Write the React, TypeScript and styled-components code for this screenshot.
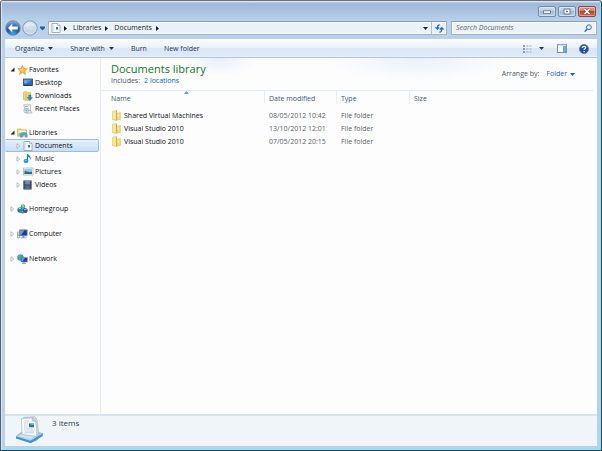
import React from "react";
import styled, { createGlobalStyle } from "styled-components";

const GlobalStyle = createGlobalStyle`
  * { box-sizing: border-box; }
  html, body { margin: 0; padding: 0; }
  body, button, input, table {
    font-family: "Open Sans", "Noto Sans", sans-serif;
    font-size: 7px;
    line-height: 12px;
  }
  button { border: 0; padding: 0; background: none; color: inherit; cursor: default; }
  svg { display: block; flex: none; }
`;

const Window = styled.div`
  min-height: 100vh;
  display: flex;
  flex-direction: column;
  padding: 0 4px 4px;
  border: 1px solid #0c4a5c;
  border-top-color: #707078;
  border-left-color: #57606c;
  border-radius: 3px 3px 0 0;
  background: linear-gradient(#d8e3f1 0, #d8e3f1 1px, #9db7d7 2px, #b9d1ea 20px, #b9d1ea 100%);
  box-shadow: inset 1px 0 #d9e8f6, inset -1px 0 #9de0f5, inset 0 -1px #9fdcf2;
`;

const TitleBar = styled.header`
  display: flex;
  justify-content: flex-end;
  gap: 2px;
  height: 20px;
  padding: 5px 1px 4px 0;
`;

const CaptionButton = styled.button<{ $danger?: boolean }>`
  width: 18px;
  height: 11px;
  display: flex;
  align-items: center;
  justify-content: center;
  border: 1px solid ${(p) => (p.$danger ? "#84494a" : "#7089a5")};
  border-radius: 2px;
  background: ${(p) =>
    p.$danger
      ? "linear-gradient(#e5a795, #d47a62 45%, #bf4327 50%, #d8694a)"
      : "linear-gradient(#cbdcef, #b9cee5 45%, #9fbad7 50%, #b9d2eb)"};
  box-shadow: inset 0 0 0 1px rgba(255, 255, 255, 0.35);
`;

const AddressRow = styled.div`
  display: flex;
  align-items: center;
  height: 14px;
`;

const HistoryButtons = styled.div`
  display: flex;
  align-items: center;
  width: 43px;
  gap: 1px;
`;

const AddressBar = styled.nav`
  flex: 1;
  display: flex;
  align-items: center;
  height: 14px;
  padding-left: 2px;
  border: 1px solid #a3b1c2;
  border-top-color: #909ca9;
  background: #ebf1f8;
  box-shadow: inset 0 0 0 1px #f8fbfe;
`;

const CrumbLead = styled.span`
  display: flex;
  margin-left: 3px;
`;

const Crumb = styled.button`
  color: #1b1f26;
  margin: 0 4px 0 6px;
`;

const RefreshButton = styled.button`
  display: flex;
  align-items: center;
  justify-content: center;
  width: 15px;
  height: 12px;
  border-left: 1px solid #b4c0ce;
`;

const DropButton = styled.button`
  display: flex;
  align-items: center;
  margin-left: auto;
  padding: 2px 3px;
`;

const SearchBox = styled.label`
  display: flex;
  align-items: center;
  width: 146px;
  height: 14px;
  margin-left: 4px;
  padding: 0 4px;
  border: 1px solid #a3b1c2;
  border-top-color: #909ca9;
  background: #edf2f9;
  box-shadow: inset 0 0 0 1px #f8fbfe;
`;

const SearchInput = styled.input`
  flex: 1;
  min-width: 0;
  height: 12px;
  padding: 0;
  border: 0;
  outline: 0;
  background: transparent;
  font-style: italic;
  color: #333;
  &::placeholder { color: #62676e; opacity: 1; }
`;

const CommandBar = styled.div`
  display: flex;
  align-items: center;
  height: 19px;
  margin-top: 4px;
  padding: 0 8px 0 10px;
  border-top: 1px solid #fff;
  border-bottom: 1px solid #b3c4d9;
  background: linear-gradient(#fafcff, #eaf1fb 48%, #dce6f4 50%, #dde8f6 90%, #eaf2fb);
`;

const Command = styled.button<{ $space?: number }>`
  display: flex;
  align-items: center;
  gap: 4px;
  margin-right: ${(p) => p.$space ?? 17}px;
  color: #1e395b;
`;

const ViewDrop = styled.span`
  display: flex;
  margin-left: 3px;
`;

const Spacer = styled.div`
  flex: 1;
`;

const Body = styled.div`
  flex: 1;
  display: flex;
  background: #fdfdfe;
`;

const Sidebar = styled.aside`
  width: 96px;
  flex: none;
  padding: 5px 1px 0 0;
  border-right: 1px solid #e3edf8;
`;

const Group = styled.section<{ $leaf?: boolean }>`
  margin-bottom: ${(p) => (p.$leaf ? 12 : 11)}px;
`;

const NavRow = styled.button<{ $child?: boolean; $selected?: boolean }>`
  display: flex;
  align-items: center;
  width: 100%;
  height: 13px;
  padding-left: ${(p) => (p.$child ? 11 : 5)}px;
  border: 1px solid ${(p) => (p.$selected ? "#9dbde0" : "transparent")};
  border-left-width: 0;
  border-radius: 2px;
  background: ${(p) => (p.$selected ? "linear-gradient(#e6f1fc, #c5def7)" : "none")};
  color: #0c0e12;
  line-height: 11px;
`;

const Twist = styled.span`
  display: flex;
  width: 7px;
`;

const NavIcon = styled.span`
  display: flex;
  width: 12px;
`;

const Main = styled.main`
  flex: 1;
  min-width: 0;
  background:
    radial-gradient(ellipse 36px 18px at 24% 0, #e8eef8, rgba(253, 253, 254, 0)),
    radial-gradient(ellipse 90px 24px at 64% 0, #eaf0f9, rgba(253, 253, 254, 0)),
    #fdfdfe;
`;

const LibraryHeader = styled.div`
  display: flex;
  justify-content: space-between;
  align-items: center;
  height: 32px;
  padding: 0 22px 0 10px;
`;

const Title = styled.h1`
  margin: 0;
  font-size: 11px;
  line-height: 14px;
  font-weight: 400;
  color: #0f7a1c;
`;

const Caption = styled.div`
  display: flex;
  align-items: center;
  line-height: 10px;
  color: #4c5560;
`;

const Link = styled.a`
  margin-left: 4px;
  color: #0a66c8;
  text-decoration: none;
`;

const ArrangeButton = styled.button`
  display: flex;
  align-items: center;
  gap: 3px;
  margin-left: 7px;
  color: #0a66c8;
`;

const FileTable = styled.table`
  width: calc(100% - 4px);
  table-layout: fixed;
  border-collapse: separate;
  border-spacing: 0;
  color: #5c5f64;
`;

const HeadCell = styled.th<{ $width?: number }>`
  position: relative;
  width: ${(p) => (p.$width ? `${p.$width}px` : "auto")};
  height: 19px;
  padding: 2px 0 4px 4px;
  border-top: 1px solid #dfebf7;
  background: ${(p) =>
    p.$width ? "linear-gradient(#dfebf7, #e6eff9) right top / 1px 13px no-repeat" : "none"};
  color: #40546e;
  font-weight: 400;
  text-align: left;
  &:first-child { padding-left: 10px; }
`;

const SortMark = styled.svg`
  position: absolute;
  top: 0;
  left: 83px;
`;

const Cell = styled.td`
  height: 13px;
  padding: 0 0 0 4px;
  white-space: nowrap;
`;

const FileName = styled.div`
  display: flex;
  align-items: center;
  gap: 3px;
  padding-left: 7px;
  color: #0c0e12;
`;

const StatusBar = styled.footer`
  display: flex;
  height: 32px;
  padding: 0 0 0 9px;
  gap: 8px;
  border-top: 2px solid #dae5f2;
  background: #f0f5fa;
  color: #2c3849;
`;

const Count = styled.span`
  padding-top: 1px;
  font-size: 8px;
`;

const Triangle = ({ color = "#1e395b" }: { color?: string }) => (
  <svg width="5" height="3" viewBox="0 0 5 3"><path d="M0 0h5L2.500 3z" fill={color} /></svg>
);
const CrumbArrow = () => (
  <svg width="3" height="5" viewBox="0 0 3 5"><path d="M0 0l3 2.500L0 5z" fill="#111820" /></svg>
);
const Opened = () => (
  <svg width="5" height="5" viewBox="0 0 5 5"><path d="M4.500 .5v4h-4z" fill="#222" /></svg>
);
const Closed = () => (
  <svg width="5" height="6" viewBox="0 0 5 6"><path d="M1 .7v4.600L3.700 3z" fill="#fff" stroke="#999da3" strokeWidth=".7" /></svg>
);

const BackIcon = () => (
  <svg width="16" height="16" viewBox="0 0 16 16">
    <defs>
      <radialGradient id="back" cx=".5" cy=".9" r=".9">
        <stop offset="0" stopColor="#3fa5ee" /><stop offset=".5" stopColor="#1b519f" /><stop offset="1" stopColor="#8eb7e2" />
      </radialGradient>
    </defs>
    <circle cx="8" cy="8" r="7.300" fill="url(#back)" stroke="#6c86a6" strokeWidth=".8" />
    <path d="M3 8l4.300-4.500v3.100h5.500v2.800H7.300v3.100z" fill="#fff" />
  </svg>
);
const ForwardIcon = () => (
  <svg width="16" height="16" viewBox="0 0 16 16">
    <circle cx="8" cy="8" r="7.200" fill="#b7c9df" stroke="#8195b0" strokeWidth=".9" />
    <circle cx="8" cy="8" r="6" fill="#c4d3e5" stroke="#dfe9f4" strokeWidth="1" />
    <path d="M3 6.500C4 1.500 12 1.500 13 6.500 9 5.500 6 8 3 6.500z" fill="#e2eaf4" />
    <path d="M12.300 8L8.500 4.500v2.300h-4.500v2.400h4.500v2.300z" fill="#d3dfed" />
  </svg>
);
const DocIcon = () => (
  <svg width="10" height="10" viewBox="0 0 10 10">
    <path d="M1 .5h5.500l2.500 2v7H1z" fill="#fafcfe" stroke="#8f9cab" strokeWidth=".8" />
    <path d="M6.500 .5v2H9" fill="#dde5ee" stroke="#8f9cab" strokeWidth=".6" />
    <path d="M2.600 2v6.500" stroke="#cbd5e0" strokeWidth=".7" />
    <rect x="5" y="4" width="2" height="2.500" fill="#2474ae" />
  </svg>
);
const RefreshIcon = () => (
  <svg width="9" height="9" viewBox="0 0 9 9" fill="none" stroke="#2166bd" strokeWidth="1.200">
    <path d="M4.600 .8C3 .8 2.400 1.700 2.400 4.500M.5 3.300l1.900 1.800 1.800-1.800" />
    <path d="M4.400 8.200c1.800 0 2.300-.9 2.300-3.700M4.800 5.500l1.900-1.800 1.800 1.800" />
  </svg>
);
const SearchIcon = () => (
  <svg width="8" height="9" viewBox="0 0 8 9">
    <circle cx="4.900" cy="3.200" r="2.400" fill="#eef6ff" stroke="#2b6fc0" strokeWidth="1" />
    <path d="M3.200 5L.7 7.800" stroke="#2b6fc0" strokeWidth="1.400" />
  </svg>
);
const ViewIcon = () => (
  <svg width="9" height="8" viewBox="0 0 9 8">
    <path d="M0 1h2M0 4h2M0 7h2" stroke="#6283ad" strokeWidth="1.300" />
    <path d="M3 1h2.500M6.500 1h2M3 4h2.500M6.500 4h2M3 7h2.500M6.500 7h2" stroke="#9ba6b3" strokeWidth=".9" />
  </svg>
);
const PaneIcon = () => (
  <svg width="10" height="9" viewBox="0 0 10 9">
    <rect x=".5" y=".5" width="9" height="8" fill="#fbfdff" stroke="#7890a8" />
    <path d="M.5 1h9" stroke="#a4b7ca" />
    <rect x="6" y="2" width="3" height="6" fill="#68acd2" />
  </svg>
);
const HelpIcon = () => (
  <svg width="10" height="10" viewBox="0 0 10 10">
    <circle cx="5" cy="5" r="4.500" fill="#1d4bab" stroke="#5370a7" strokeWidth=".8" />
    <path d="M1.600 4C2 .8 8 .8 8.400 4 6 3.200 4 5 1.600 4z" fill="#6f9be0" opacity=".5" />
    <path d="M3.500 3.800C3.500 1.700 6.700 1.800 6.600 3.700 6.500 4.700 5.100 4.700 5.100 6M5.100 7v1.200" fill="none" stroke="#fff" strokeWidth="1.200" />
  </svg>
);
const StarIcon = () => (
  <svg width="11" height="10" viewBox="0 0 10 10">
    <path d="M5 .3l1.400 3 3.300.4-2.500 2.200.8 3.500L5 7.600 2 9.400l.8-3.500L.3 3.700l3.300-.4z" fill="#ffb638" stroke="#e98a1f" strokeWidth=".6" />
    <path d="M5 1.800l1 2.400-1 2-2.500-1.800 1.700-.4z" fill="#ffdb85" />
  </svg>
);
const DesktopIcon = () => (
  <svg width="10" height="9" viewBox="0 0 10 9">
    <rect x=".5" y="1" width="9" height="6.500" fill="#2869b8" stroke="#24477e" strokeWidth=".8" />
    <path d="M1 1.500h8L5 5H1z" fill="#5391d3" />
    <path d="M1.500 3h2M1.500 5h2" stroke="#d2e6fb" strokeWidth=".6" />
    <path d="M1 7.500h8" stroke="#172d4e" strokeWidth=".8" />
  </svg>
);
const FolderIcon = () => (
  <svg width="9" height="11" viewBox="0 0 9 11">
    <path d="M.5 1.500L3.800.5h.8v3l3.800-1V9.500L4 10.500.5 9.500z" fill="#edd06b" stroke="#d8bb5b" strokeWidth=".5" />
    <path d="M.8 1.800l3-1v8.700l-3-.5z" fill="#f9e79b" />
    <path d="M4 1h.9v8.800L4 10z" fill="#d2aa3c" />
    <path d="M5.200 3.800l2.900-.8v6l-2.900.8z" fill="#f2d978" />
    <path d="M6.300 4v2.500" stroke="#fff7cf" strokeWidth=".9" />
  </svg>
);
const DownloadsIcon = () => (
  <svg width="10" height="10" viewBox="0 0 10 10">
    <path d="M.5 1.300L3.500.6l.7.800h3.300V9L3 9.500.5 8.700z" fill="#f3d877" stroke="#cfae49" strokeWidth=".6" />
    <path d="M3 2.500v6.500" stroke="#dcb64c" strokeWidth=".7" />
    <path d="M5.800 4h2.200v2.500h1.600L6.900 9.500 4.200 6.500h1.600z" fill="#2790dc" stroke="#1767ad" strokeWidth=".5" />
  </svg>
);
const RecentIcon = () => (
  <svg width="10" height="10" viewBox="0 0 10 10">
    <path d="M.7.8h7L7.500 7 9.200 9H3z" fill="#edf2f7" stroke="#9ba9b8" strokeWidth=".7" />
    <path d="M2 2.500h3M3 4.500l3 .3M5 6.500h2" stroke="#7b93b0" strokeWidth=".7" />
    <circle cx="3" cy="6.800" r="2.200" fill="#d7e5f1" stroke="#8da0b5" strokeWidth=".6" />
    <path d="M3 5.500v1.500h1" fill="none" stroke="#405b7e" strokeWidth=".5" />
  </svg>
);
const LibrariesIcon = () => (
  <svg width="11" height="10" viewBox="0 0 11 10">
    <path d="M.5 1h3.500l.7.800h4.800v6.500h-9z" fill="#edcf6c" stroke="#c7a344" strokeWidth=".6" />
    <path d="M1.500 2.500h7v2.500h-7z" fill="#fff7d0" />
    <path d="M2 4.500h5V8H1z" fill="#96ce80" />
    <path d="M3.500 9.300V6C4 4 9.700 4 10.200 6v3.300H8.500V7h-3v2.300z" fill="#4eabe3" stroke="#3786bb" strokeWidth=".4" />
  </svg>
);
const MusicIcon = () => (
  <svg width="10" height="11" viewBox="0 0 10 11">
    <path d="M4.500 1v6.500" stroke="#1573c9" strokeWidth="1.200" />
    <path d="M4.300.3C5 2.500 9.400 3 7.200 7.200 7.500 4.800 6 4 4.300 3.500z" fill="#2387d9" />
    <ellipse cx="3" cy="8" rx="2.500" ry="2.100" fill="#2186da" />
    <ellipse cx="2.800" cy="7.500" rx="1.200" ry=".7" fill="#87c5f2" />
  </svg>
);
const PicturesIcon = () => (
  <svg width="11" height="9" viewBox="0 0 11 9">
    <rect x=".5" y="1" width="9.500" height="7" fill="#fff" stroke="#9daab6" strokeWidth=".7" />
    <path d="M1.500 2h7.500v5h-7.500z" fill="#8dcbf0" />
    <path d="M1.500 3.500C4 4 5 6 9 4.500V7H1.500z" fill="#218060" />
    <path d="M1.500 6.200C4 5.200 6 6.300 9 6v1H1.500z" fill="#285ea4" />
  </svg>
);
const VideosIcon = () => (
  <svg width="9" height="10" viewBox="0 0 9 10">
    <rect x=".4" y=".5" width="8.200" height="9" fill="#26364b" />
    <rect x="2.200" y="1" width="4.600" height="3.500" fill="#5ca4d2" />
    <rect x="2.200" y="5.300" width="4.600" height="3.700" fill="#3971a5" />
    <path d="M2.200 4L4 2.500l2.800 2M2.200 8.500l2-1.500 2.600 1" stroke="#b25545" strokeWidth=".7" fill="none" />
    <path d="M1.300 1v8M7.700 1v8" stroke="#8f9cab" strokeWidth=".6" strokeDasharray="1 .8" />
  </svg>
);
const HomegroupIcon = () => (
  <svg width="11" height="10" viewBox="0 0 11 10">
    <circle cx="6" cy="2.500" r="2.200" fill="#59b45b" />
    <circle cx="3" cy="6" r="2.700" fill="#2875c6" />
    <circle cx="8" cy="6.500" r="2.600" fill="#1e56a6" />
    <path d="M5 1.500l2 1M1.500 5l1.500-.8 1 1M7 6l1.500-1 1 1" stroke="#c7efff" strokeWidth=".9" fill="none" />
    <path d="M3 7.500l2.500 1.500 2-1" stroke="#46a54c" strokeWidth="1.500" fill="none" />
  </svg>
);
const ComputerIcon = () => (
  <svg width="11" height="10" viewBox="0 0 11 10">
    <path d="M.5 3h2v6h-2z" fill="#d8dee5" stroke="#8995a2" strokeWidth=".6" />
    <path d="M2.500.8h7.700v6H2.500z" fill="#193e91" stroke="#8998ac" strokeWidth=".7" />
    <path d="M3 1.300h4.500L4 6.200H3z" fill="#6b9ae6" />
    <path d="M5.500 7h2v1.500h2v.8H3.500v-.8h2z" fill="#8998ac" />
    <path d="M1 5v2" stroke="#44ad4b" strokeWidth=".8" />
  </svg>
);
const NetworkIcon = () => (
  <svg width="11" height="10" viewBox="0 0 11 10">
    <circle cx="3.500" cy="3.500" r="3.200" fill="#2f9bd1" />
    <path d="M1 2.500C2 .5 4 .5 4 2L2.500 3.500 3 5.500C1.800 5.800 1 4 1 2.500z" fill="#5ab85c" />
    <rect x="4" y="3.500" width="6.300" height="4.500" fill="#183f9c" stroke="#7f93ae" strokeWidth=".6" />
    <path d="M4.500 4h3.500L5.500 7.500h-1z" fill="#629ae3" />
    <path d="M7 8v1.300M5 9.400h4" stroke="#72859d" strokeWidth=".8" />
  </svg>
);
const LibraryItemIcon = () => (
  <svg width="30" height="28" viewBox="0 0 30 28">
    <path d="M2 20.500L8.500 15.500 24 16.500l4.800 1L22.500 24.500 16.500 26z" fill="#a9d5ee" stroke="#6aa5cb" strokeWidth=".6" />
    <path d="M2 20.500l14.500 4.300L28.800 17.500v2.500L16.800 27.300 2 22.500z" fill="#4791c6" />
    <path d="M5 20.200l5-3.200 15 1-8.700 5.200z" fill="#c9e7f7" />
    <path d="M9.500 1.500L21 .8l2 3 2 15.500-15-1.500z" fill="#d5e0e8" stroke="#9aa9b6" strokeWidth=".6" />
    <path d="M7.500 2.500L18 1.800l3.800 3.200 1.200 15.500L8 18.500z" fill="#f7fafc" stroke="#98a9b7" strokeWidth=".6" />
    <path d="M18 1.800l.3 3.400 3.500-.2z" fill="#cbd7e1" stroke="#98a9b7" strokeWidth=".5" />
    <path d="M10 5h5M10 7h4M10 9h3.500M10 11h3.500M10 13h9M10.500 15h9.500M10.500 16.800h9.500" stroke="#b4c3ce" strokeWidth=".7" />
    <path d="M15 7h5v4.300h-5z" fill="#2f739c" />
    <path d="M15 7.500c2 .5 3 2.500 5 1V7h-5z" fill="#76c0de" />
  </svg>
);

type Item = { label: string; icon: React.ReactNode; expandable?: boolean; selected?: boolean };
const groups: { head: Item; open?: boolean; items: Item[] }[] = [
  {
    head: { label: "Favorites", icon: <StarIcon /> },
    open: true,
    items: [
      { label: "Desktop", icon: <DesktopIcon /> },
      { label: "Downloads", icon: <DownloadsIcon /> },
      { label: "Recent Places", icon: <RecentIcon /> },
    ],
  },
  {
    head: { label: "Libraries", icon: <LibrariesIcon /> },
    open: true,
    items: [
      { label: "Documents", icon: <DocIcon />, expandable: true, selected: true },
      { label: "Music", icon: <MusicIcon />, expandable: true },
      { label: "Pictures", icon: <PicturesIcon />, expandable: true },
      { label: "Videos", icon: <VideosIcon />, expandable: true },
    ],
  },
  { head: { label: "Homegroup", icon: <HomegroupIcon /> }, items: [] },
  { head: { label: "Computer", icon: <ComputerIcon /> }, items: [] },
  { head: { label: "Network", icon: <NetworkIcon /> }, items: [] },
];

const files = [
  { name: "Shared Virtual Machines", date: "08/05/2012 10:42" },
  { name: "Visual Studio 2010", date: "13/10/2012 12:01" },
  { name: "Visual Studio 2010", date: "07/05/2012 20:15" },
];

export default function App() {
  return (
    <>
      <GlobalStyle />
      <Window>
        <TitleBar>
          <CaptionButton aria-label="Minimize">
            <svg width="8" height="4" viewBox="0 0 8 4"><rect x=".5" y=".8" width="7" height="2.500" fill="#fff" stroke="#5a6a7e" strokeWidth=".8" /></svg>
          </CaptionButton>
          <CaptionButton aria-label="Maximize">
            <svg width="8" height="7" viewBox="0 0 8 7"><rect x="1" y="1" width="6" height="5" fill="#fff" stroke="#5a6a7e" strokeWidth=".9" /><rect x="3" y="2.800" width="2" height="1.400" fill="#5a6a7e" /></svg>
          </CaptionButton>
          <CaptionButton $danger aria-label="Close">
            <svg width="8" height="7" viewBox="0 0 8 7"><path d="M1.500 1l5 5M6.500 1l-5 5" stroke="#6d4148" strokeWidth="2.600" /><path d="M1.500 1l5 5M6.500 1l-5 5" stroke="#fff" strokeWidth="1.500" /></svg>
          </CaptionButton>
        </TitleBar>
        <AddressRow>
          <HistoryButtons>
            <button aria-label="Back"><BackIcon /></button>
            <button aria-label="Forward"><ForwardIcon /></button>
            <button aria-label="Recent pages">
              <svg width="7" height="5" viewBox="0 0 7 5"><path d="M1 .5h5v1.500L3.500 4.500 1 2z" fill="#2b5f9d" /></svg>
            </button>
          </HistoryButtons>
          <AddressBar aria-label="Address">
            <DocIcon />
            <CrumbLead><CrumbArrow /></CrumbLead>
            <Crumb>Libraries</Crumb>
            <CrumbArrow />
            <Crumb>Documents</Crumb>
            <CrumbArrow />
            <DropButton aria-label="Previous locations"><Triangle color="#16263b" /></DropButton>
            <RefreshButton aria-label="Refresh"><RefreshIcon /></RefreshButton>
          </AddressBar>
          <SearchBox>
            <SearchInput type="text" aria-label="Search Documents" placeholder="Search Documents" />
            <SearchIcon />
          </SearchBox>
        </AddressRow>
        <CommandBar role="toolbar">
          <Command>Organize <Triangle /></Command>
          <Command>Share with <Triangle /></Command>
          <Command>Burn</Command>
          <Command>New folder</Command>
          <Spacer />
          <Command aria-label="Change view" $space={13}><ViewIcon /><ViewDrop><Triangle /></ViewDrop></Command>
          <Command aria-label="Preview pane" $space={12}><PaneIcon /></Command>
          <Command aria-label="Help" $space={0}><HelpIcon /></Command>
        </CommandBar>
        <Body>
          <Sidebar>
            {groups.map((g) => (
              <Group key={g.head.label} $leaf={!g.open}>
                <NavRow>
                  <Twist>{g.open ? <Opened /> : <Closed />}</Twist>
                  <NavIcon>{g.head.icon}</NavIcon>
                  {g.head.label}
                </NavRow>
                {g.items.map((i) => (
                  <NavRow key={i.label} $child $selected={i.selected}>
                    <Twist>{i.expandable && <Closed />}</Twist>
                    <NavIcon>{i.icon}</NavIcon>
                    {i.label}
                  </NavRow>
                ))}
              </Group>
            ))}
          </Sidebar>
          <Main>
            <LibraryHeader>
              <div>
                <Title>Documents library</Title>
                <Caption>Includes: <Link href="#locations">2 locations</Link></Caption>
              </div>
              <Caption>Arrange by: <ArrangeButton>Folder <Triangle color="#0a66c8" /></ArrangeButton></Caption>
            </LibraryHeader>
            <FileTable>
              <thead>
                <tr>
                  <HeadCell $width={164}>
                    Name
                    <SortMark width="5" height="3" viewBox="0 0 5 3"><path d="M0 3h5L2.500 0z" fill="#5d9dc4" /></SortMark>
                  </HeadCell>
                  <HeadCell $width={72}>Date modified</HeadCell>
                  <HeadCell $width={73}>Type</HeadCell>
                  <HeadCell>Size</HeadCell>
                </tr>
              </thead>
              <tbody>
                {files.map((f) => (
                  <tr key={f.date}>
                    <Cell><FileName><FolderIcon />{f.name}</FileName></Cell>
                    <Cell>{f.date}</Cell>
                    <Cell>File folder</Cell>
                    <Cell />
                  </tr>
                ))}
              </tbody>
            </FileTable>
          </Main>
        </Body>
        <StatusBar>
          <LibraryItemIcon />
          <Count>3 items</Count>
        </StatusBar>
      </Window>
    </>
  );
}
